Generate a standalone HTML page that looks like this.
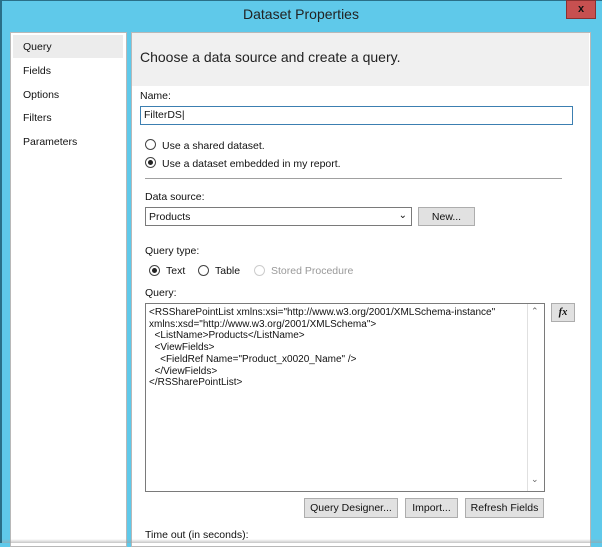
<!DOCTYPE html>
<html><head><style>
*{margin:0;padding:0;box-sizing:border-box}
body{width:602px;height:543px;overflow:hidden;background:#5fc9ea;font-family:"Liberation Sans",sans-serif;font-size:10.5px;color:#111;position:relative}
.a{position:absolute;white-space:nowrap}
.btn{position:absolute;background:#e1e1e1;border:1px solid #adadad;text-align:center;line-height:18px;font-size:10.5px}
.radio{position:absolute;width:11px;height:11px;border:1px solid #444;border-radius:50%;background:#fff}
.radio.on::after{content:"";position:absolute;left:2px;top:2px;width:5px;height:5px;border-radius:50%;background:#222}
</style></head><body>
<div class="a" style="left:0;top:0;width:2px;height:543px;background:#2a6f88"></div>
<div class="a" style="left:0;top:0;width:602px;height:1px;background:#2a6f88"></div>
<div class="a" style="left:0;top:6px;width:602px;text-align:center;font-size:14px;color:#222">Dataset Properties</div>
<div class="a" style="left:566px;top:0;width:30px;height:19px;background:#c75050;border:1px solid #8a3030;color:#111;font-weight:bold;font-size:11px;text-align:center;line-height:16px">x</div>
<!-- left panel -->
<div class="a" style="left:10px;top:32px;width:117px;height:515px;background:#fff;border:1px solid #b8b8b8"></div>
<div class="a" style="left:13px;top:35px;width:110px;height:23px;background:#ececec"></div>
<div class="a" style="left:23px;top:41px">Query</div>
<div class="a" style="left:23px;top:65px">Fields</div>
<div class="a" style="left:23px;top:89px">Options</div>
<div class="a" style="left:23px;top:112px">Filters</div>
<div class="a" style="left:23px;top:136px">Parameters</div>
<!-- main panel -->
<div class="a" style="left:131px;top:32px;width:460px;height:515px;background:#fff;border:1px solid #b8b8b8"></div>
<div class="a" style="left:132px;top:33px;width:457px;height:53px;background:#f0f0f0"></div>
<div class="a" style="left:140px;top:49px;font-size:14px;color:#222">Choose a data source and create a query.</div>
<div class="a" style="left:140px;top:90px">Name:</div>
<div class="a" style="left:140px;top:106px;width:433px;height:19px;border:1px solid #3c7fb1;padding:2px 3px">FilterDS|</div>
<div class="radio" style="left:145px;top:139px"></div>
<div class="a" style="left:162px;top:140px">Use a shared dataset.</div>
<div class="radio on" style="left:145px;top:157px"></div>
<div class="a" style="left:162px;top:158px">Use a dataset embedded in my report.</div>
<div class="a" style="left:145px;top:178px;width:417px;height:1px;background:#a0a0a0"></div>
<div class="a" style="left:145px;top:191px">Data source:</div>
<div class="a" style="left:145px;top:207px;width:267px;height:19px;border:1px solid #7a7a7a;padding:3px 3px">Products<span style="position:absolute;right:4px;top:2px;font-size:10px">&#8964;</span></div>
<div class="btn" style="left:418px;top:207px;width:57px;height:19px">New...</div>
<div class="a" style="left:145px;top:245px">Query type:</div>
<div class="radio on" style="left:149px;top:265px"></div>
<div class="a" style="left:166px;top:265px">Text</div>
<div class="radio" style="left:198px;top:265px"></div>
<div class="a" style="left:215px;top:265px">Table</div>
<div class="radio" style="left:254px;top:265px;border-color:#ccc"></div>
<div class="a" style="left:271px;top:265px;color:#999">Stored Procedure</div>
<div class="a" style="left:145px;top:287px">Query:</div>
<div class="a" style="left:145px;top:303px;width:400px;height:189px;border:1px solid #7a7a7a"></div>
<div class="a" style="left:527px;top:304px;width:17px;height:187px;background:#fff;border-left:1px solid #e0e0e0"></div>
<div class="a" style="left:531px;top:306px;font-size:9px;color:#666">&#8963;</div>
<div class="a" style="left:531px;top:474px;font-size:9px;color:#666">&#8964;</div>
<div class="a" style="left:149px;top:307px;line-height:11.7px;font-size:10px">&lt;RSSharePointList xmlns:xsi="http://www.w3.org/2001/XMLSchema-instance"<br>xmlns:xsd="http://www.w3.org/2001/XMLSchema"&gt;<br>&nbsp;&nbsp;&lt;ListName&gt;Products&lt;/ListName&gt;<br>&nbsp;&nbsp;&lt;ViewFields&gt;<br>&nbsp;&nbsp;&nbsp;&nbsp;&lt;FieldRef Name="Product_x0020_Name" /&gt;<br>&nbsp;&nbsp;&lt;/ViewFields&gt;<br>&lt;/RSSharePointList&gt;</div>
<div class="btn" style="left:551px;top:303px;width:24px;height:19px;font-family:'Liberation Serif',serif;font-style:italic;font-weight:bold">fx</div>
<div class="btn" style="left:304px;top:498px;width:94px;height:20px">Query Designer...</div>
<div class="btn" style="left:405px;top:498px;width:53px;height:20px">Import...</div>
<div class="btn" style="left:465px;top:498px;width:79px;height:20px">Refresh Fields</div>
<div class="a" style="left:145px;top:529px">Time out (in seconds):</div>
<div class="a" style="left:2px;top:539px;width:600px;height:4px;background:linear-gradient(rgba(255,255,255,0),rgba(160,160,160,0.6))"></div>
</body></html>
